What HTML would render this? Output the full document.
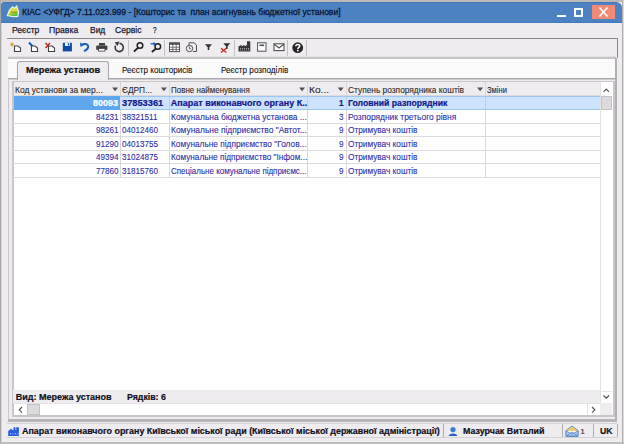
<!DOCTYPE html>
<html><head><meta charset="utf-8">
<style>
*{margin:0;padding:0;box-sizing:border-box}
html,body{width:624px;height:444px;overflow:hidden}
body{position:relative;background:#efecf0;font-family:"Liberation Sans",sans-serif;font-size:9px;color:#000}
.a{position:absolute}
.t{position:absolute;white-space:pre;line-height:1;transform-origin:0 0;-webkit-text-stroke:0.2px currentColor}
svg{position:absolute;overflow:visible}
.hl{position:absolute;height:1px}
.vl{position:absolute;width:1px}
</style></head><body>
<!-- outer frame -->
<div class="a" style="left:0;top:0;width:624px;height:2px;background:#bdb9b2"></div>
<div class="a" style="left:0;top:0;width:1px;height:444px;background:#a8a8a8"></div>
<div class="a" style="left:1px;top:23px;width:1px;height:421px;background:#d4d2d4"></div>
<div class="a" style="left:622px;top:0;width:1px;height:444px;background:#b0aeb0"></div>
<div class="a" style="left:623px;top:0;width:1px;height:444px;background:#dcdadc"></div>
<div class="a" style="left:0;top:442px;width:624px;height:2px;background:#bebcbe"></div>

<!-- title bar -->
<div class="a" style="left:1px;top:2px;width:621px;height:21px;background:#4c82c1;border-radius:3px 6px 0 0;border-top:1px solid #4078bb;border-bottom:1px solid #4279bc"></div>
<svg style="left:0;top:0" width="30" height="23">
  <defs><linearGradient id="ig" x1="0" y1="0" x2="0.3" y2="1"><stop offset="0" stop-color="#58b83a"/><stop offset="0.4" stop-color="#e4de3c"/><stop offset="0.65" stop-color="#d8da3a"/><stop offset="1" stop-color="#48c040"/></linearGradient></defs>
  <path d="M7.3 15.6 L9.3 10.3 L12.5 6.8 L14.3 8.3 L16.6 6 L18.6 11.9 L17.8 16.4 L13.3 16.8 Z" fill="url(#ig)" stroke="#eef6e6" stroke-width="1.1"/>
  <rect x="10.8" y="11.6" width="6" height="1.6" fill="#6a7a30" opacity="0.55"/>
</svg>
<!-- window buttons -->
<div class="a" style="left:557px;top:15px;width:9px;height:2px;background:#fff"></div>
<div class="a" style="left:574px;top:8px;width:9px;height:9px;border:2px solid #fff"></div>
<div class="a" style="left:592px;top:5px;width:23px;height:14px;background:#f08a76"></div>
<svg style="left:592px;top:5px" width="23" height="14"><path d="M7.5 2.5 L15.5 11.5 M15.5 2.5 L7.5 11.5" stroke="#fff" stroke-width="1.6"/></svg>

<!-- menu / toolbar lines -->
<div class="a" style="left:7px;top:38px;width:611px;height:1px;background:#8a888a"></div>
<div class="a" style="left:617px;top:38px;width:1px;height:20px;background:#8a888a"></div>
<div class="a" style="left:8px;top:56px;width:608px;height:1px;background:#e2e0e2"></div>
<div class="a" style="left:8px;top:57px;width:608px;height:2px;background:#c6c4c6"></div>

<!-- toolbar separators -->
<div class="a" style="left:128px;top:40px;width:1px;height:16px;background:#c4c2c4"></div>
<div class="a" style="left:164px;top:40px;width:1px;height:16px;background:#c4c2c4"></div>
<div class="a" style="left:234px;top:40px;width:1px;height:16px;background:#c4c2c4"></div>
<div class="a" style="left:287px;top:40px;width:1px;height:16px;background:#c4c2c4"></div>
<div class="a" style="left:306px;top:40px;width:1px;height:16px;background:#c4c2c4"></div>

<!-- toolbar icons -->
<svg style="left:0;top:0" width="320" height="60">
  <!-- new -->
  <path d="M12 42.3 L14.2 44.5 L12 46.7 L9.8 44.5 Z" fill="#e2a448"/>
  <path d="M14.5 51.5 V46 H18 L20.5 48 V51.5 Z" fill="#fff" stroke="#404040" stroke-width="1.1"/>
  <!-- edit -->
  <path d="M29 42.5 L34.5 48.5" stroke="#1060c0" stroke-width="2"/>
  <path d="M31.5 51.5 V46 H35 L37.5 48 V51.5 Z" fill="#fff" stroke="#404040" stroke-width="1.1"/>
  <!-- delete -->
  <path d="M45.5 43 L50 48 M50 43 L45.5 48" stroke="#c82a1a" stroke-width="1.4"/>
  <path d="M48.5 51.5 V46 H52 L54.5 48 V51.5 Z" fill="#fff" stroke="#404040" stroke-width="1.1"/>
  <!-- save -->
  <path d="M62.8 42.8 H71.9 V51.4 H62.8 Z" fill="#0d4aa8"/>
  <rect x="65" y="42.8" width="4.8" height="3.2" fill="#f4f4fa"/>
  <rect x="67.8" y="43.3" width="1.2" height="2.2" fill="#0d4aa8"/>
  <!-- undo -->
  <path d="M81.5 44.8 C 88 41.5, 91.5 48, 84 51.2" fill="none" stroke="#1060c0" stroke-width="2"/>
  <path d="M80 42.5 L80.5 47 L84 45 Z" fill="#1060c0"/>
  <!-- print -->
  <rect x="99" y="43" width="6" height="2.5" fill="#404040"/>
  <rect x="96.2" y="45.5" width="11.2" height="4.5" rx="1" fill="#404040"/>
  <rect x="98.5" y="48.5" width="6.5" height="2.6" fill="#fff" stroke="#404040" stroke-width="0.8"/>
  <!-- refresh -->
  <path d="M119.5 43.4 A4.1 4.1 0 1 1 115.6 45.6" fill="none" stroke="#383838" stroke-width="1.6"/>
  <path d="M114.6 42.6 L119.4 41.6 L117.6 46 Z" fill="#383838"/>
  <!-- search -->
  <circle cx="140" cy="45.5" r="2.8" fill="none" stroke="#202020" stroke-width="1.5"/>
  <path d="M138 47.8 L134 51.5" stroke="#202020" stroke-width="1.8"/>
  <!-- search arrow -->
  <circle cx="157.8" cy="46.5" r="2.8" fill="none" stroke="#202020" stroke-width="1.5"/>
  <path d="M155.8 48.8 L151.8 52" stroke="#202020" stroke-width="1.8"/>
  <path d="M150.5 43.8 H154.5" stroke="#1060c0" stroke-width="1.3"/>
  <path d="M153.5 41.8 L156 43.8 L153.5 45.8 Z" fill="#1060c0"/>
  <!-- table -->
  <rect x="169.5" y="42.8" width="10" height="8.8" fill="#fff" stroke="#505050" stroke-width="1"/>
  <rect x="169.5" y="42.8" width="10" height="2" fill="#505050"/>
  <path d="M169.5 47.2 H179.5 M169.5 49.4 H179.5 M172.8 42.8 V51.6 M176.2 42.8 V51.6" stroke="#505050" stroke-width="0.8"/>
  <!-- clock doc -->
  <path d="M189 48 V42.8 H194 L196.5 45 V51.5 H193" fill="none" stroke="#505050" stroke-width="1"/>
  <circle cx="189.5" cy="48.5" r="3.2" fill="#efecf0" stroke="#505050" stroke-width="1"/>
  <path d="M189.5 46.5 V48.7 H191" fill="none" stroke="#505050" stroke-width="0.8"/>
  <!-- filter -->
  <path d="M205 44.2 H212 L209.3 47.2 V50 L207.7 50 V47.2 Z" fill="#303030"/>
  <!-- filter x -->
  <path d="M223.3 43.2 H230.3 L227.6 46.2 V49 L226 49 V46.2 Z" fill="#303030"/>
  <path d="M221 48.3 L226.3 52.6 M226.3 48.3 L221 52.6" stroke="#d02818" stroke-width="1.3"/>
  <!-- factory -->
  <path d="M238.5 51.5 V46.5 L241.5 44.8 V46.5 L244.5 44.8 V46.5 L247 45 V41.2 H250.3 V51.5 Z" fill="#353535"/>
  <path d="M240 48.5 H249 M240 50 H249" stroke="#efecf0" stroke-width="0.6" stroke-dasharray="1 1"/>
  <!-- doc -->
  <rect x="257.6" y="42.8" width="8.4" height="8.4" fill="#fff" stroke="#505050" stroke-width="1"/>
  <rect x="259.5" y="44.5" width="4.6" height="1.6" fill="#505050"/>
  <!-- mail -->
  <rect x="274" y="43.8" width="10" height="6.8" fill="#fff" stroke="#505050" stroke-width="1.1"/>
  <path d="M274.2 44.2 L279 48 L283.8 44.2" fill="none" stroke="#505050" stroke-width="1.1"/>
  <!-- help -->
  <circle cx="297.7" cy="47.7" r="5.4" fill="#252525"/>
  <path d="M295.8 46.3 C 295.8 43.8, 299.8 43.8, 299.8 46 C 299.8 47.4, 297.8 47.5, 297.8 49" fill="none" stroke="#fff" stroke-width="1.5"/>
  <rect x="297" y="49.8" width="1.6" height="1.6" fill="#fff"/>
</svg>

<!-- tab strip -->
<div class="a" style="left:8px;top:59px;width:608px;height:19px;background:#fbfafb"></div>
<div class="a" style="left:8px;top:78px;width:608px;height:1px;background:#a6a4a6"></div>
<div class="a" style="left:8px;top:79px;width:608px;height:1px;background:#cfcdcf"></div>
<div class="a" style="left:17px;top:61px;width:92px;height:19px;background:#efecf0;border:1px solid #a6a4a6;border-bottom:none;border-radius:3px 3px 0 0"></div>

<!-- panel borders -->
<div class="a" style="left:615px;top:58px;width:2px;height:364px;background:#b2b0b2"></div>
<div class="a" style="left:8px;top:419px;width:609px;height:3px;background:#b6b4b6"></div>
<div class="a" style="left:8px;top:80px;width:1px;height:339px;background:#c8c6c8"></div>

<!-- grid frame -->
<div class="a" style="left:12px;top:81px;width:603px;height:336px;background:#fff;border:1px solid #c8c6c8;border-right-width:2px;border-bottom-width:2px;border-left-width:2px"></div>
<!-- header -->
<div class="a" style="left:14px;top:82px;width:586px;height:14px;background:#efecf0;border-bottom:1px solid #dcdadc"></div>
<div class="vl" style="left:120px;top:82px;height:95px;background:#d8d6d8"></div>
<div class="vl" style="left:169px;top:82px;height:95px;background:#d8d6d8"></div>
<div class="vl" style="left:307px;top:82px;height:95px;background:#d8d6d8"></div>
<div class="vl" style="left:346px;top:82px;height:95px;background:#d8d6d8"></div>
<div class="vl" style="left:485px;top:82px;height:95px;background:#d8d6d8"></div>
<svg style="left:0;top:0" width="620" height="100">
  <path d="M112.1 87.5 H118.1 L115.1 91.2 Z M160.9 87.5 H166.9 L163.9 91.2 Z M299.1 87.5 H305.1 L302.1 91.2 Z M337.7 87.5 H343.7 L340.7 91.2 Z M477.1 87.5 H483.1 L480.1 91.2 Z" fill="#555355"/>
</svg>
<!-- selected row -->
<div class="a" style="left:14px;top:96px;width:586px;height:14px;background:#cce3fb;border-top:1px solid #9ec6ee;border-bottom:1px solid #9ec6ee"></div>
<div class="a" style="left:14px;top:96px;width:106px;height:14px;background:#5fa6ee"></div>
<div class="vl" style="left:169px;top:97px;height:12px;background:#b4d0ee"></div>
<div class="vl" style="left:307px;top:97px;height:12px;background:#b4d0ee"></div>
<div class="vl" style="left:346px;top:97px;height:12px;background:#b4d0ee"></div>
<div class="vl" style="left:485px;top:97px;height:12px;background:#b4d0ee"></div>
<!-- row lines -->
<div class="hl" style="left:13px;top:123px;width:587px;background:#dcdadc"></div>
<div class="hl" style="left:13px;top:136px;width:587px;background:#dcdadc"></div>
<div class="hl" style="left:13px;top:150px;width:587px;background:#dcdadc"></div>
<div class="hl" style="left:13px;top:163px;width:587px;background:#dcdadc"></div>
<div class="hl" style="left:13px;top:177px;width:587px;background:#dcdadc"></div>

<!-- vertical scrollbar -->
<div class="a" style="left:600px;top:82px;width:1px;height:321px;background:#e4e2e4"></div>
<svg style="left:600px;top:82px" width="13" height="14"><path d="M3.6 9.8 L6.3 7.1 L9 9.8" fill="none" stroke="#505050" stroke-width="1.1"/></svg>
<div class="a" style="left:601px;top:96px;width:11px;height:14px;background:#dcdadc;border:1px solid #c4c2c4"></div>
<div class="hl" style="left:601px;top:391px;width:11px;background:#e4e2e4"></div>
<svg style="left:600px;top:391px" width="13" height="12"><path d="M3.5 4.5 L6.3 7.2 L9.1 4.5" fill="none" stroke="#505050" stroke-width="1.1"/></svg>

<!-- status band -->
<div class="a" style="left:13px;top:390px;width:587px;height:13px;background:#efecf0"></div>
<!-- horizontal scrollbar -->
<div class="hl" style="left:13px;top:403px;width:599px;background:#e4e2e4"></div>
<svg style="left:13px;top:403px" width="14" height="12"><path d="M9 4 L6.2 6.8 L9 9.6" fill="none" stroke="#505050" stroke-width="1.1"/></svg>
<div class="a" style="left:27px;top:404px;width:13px;height:11px;background:#dcdadc;border:1px solid #c4c2c4"></div>
<div class="vl" style="left:587px;top:403px;height:12px;background:#e4e2e4"></div>
<svg style="left:587px;top:403px" width="13" height="12"><path d="M5 4 L7.8 6.8 L5 9.6" fill="none" stroke="#505050" stroke-width="1.1"/></svg>
<div class="a" style="left:600px;top:403px;width:12px;height:12px;background:#efecf0"></div>

<!-- status bar -->
<div class="hl" style="left:7px;top:423px;width:610px;background:#d4d2d4"></div>
<div class="hl" style="left:7px;top:437px;width:610px;background:#d4d2d4"></div>
<div class="vl" style="left:442px;top:424px;height:13px;background:#e8e6e8"></div>
<div class="vl" style="left:443px;top:424px;height:13px;background:#b0aeb0"></div>
<div class="vl" style="left:562px;top:424px;height:13px;background:#b0aeb0"></div>
<div class="vl" style="left:593px;top:424px;height:13px;background:#b0aeb0"></div>
<div class="vl" style="left:617px;top:424px;height:13px;background:#b0aeb0"></div>
<svg style="left:0;top:0" width="620" height="444">
  <!-- building icon -->
  <path d="M8.2 436 V431 L11 428.8 L13.5 430.5 V427.2 H15.5 V430 H16.2 V427.2 H18.9 V436 Z" fill="#2a5ee0"/>
  <path d="M10 433.8 h1 M12.5 433.8 h1 M15 433.8 h1 M17.5 433.8 h1" stroke="#cfe0ff" stroke-width="1"/>
  <!-- user icon -->
  <circle cx="453" cy="429.6" r="2.6" fill="#3a7ad8"/>
  <path d="M448.6 436 C 449 432.5, 457 432.5, 457.4 436 Z" fill="#2a5ec8"/>
  <!-- mail icon -->
  <path d="M566 430.5 L572 426 L578 430.5 V436.3 H566 Z" fill="#f3cc6a" stroke="#5a88c8" stroke-width="0.9"/>
  <path d="M567.5 431 H576.5 V434 H567.5 Z" fill="#fdfdf8"/>
  <path d="M566 436.3 L572 432 L578 436.3 Z M566 430.8 L572 434.2 L578 430.8 V436.3 H566 Z" fill="#a8c8f0" stroke="#5a88c8" stroke-width="0.8"/>
</svg>

<div class="t" style="left:22.30px;top:7px;font-size:9.5px;font-weight:400;color:#0a1430;transform:scaleX(0.8958);-webkit-text-stroke-width:0.3px;">КІАС &lt;УФГД&gt; 7.11.023.999 - [Кошторис та  план асигнувань бюджетної установи]</div>
<div class="t" style="left:11.50px;top:26px;font-size:9px;font-weight:400;color:#20182e;transform:scaleX(0.9483);-webkit-text-stroke-width:0.25px;">Реєстр</div>
<div class="t" style="left:49.40px;top:26px;font-size:9px;font-weight:400;color:#20182e;transform:scaleX(0.9613);-webkit-text-stroke-width:0.25px;">Правка</div>
<div class="t" style="left:90.00px;top:26px;font-size:9px;font-weight:400;color:#20182e;transform:scaleX(0.9375);-webkit-text-stroke-width:0.25px;">Вид</div>
<div class="t" style="left:115.40px;top:26px;font-size:9px;font-weight:400;color:#20182e;transform:scaleX(0.9500);-webkit-text-stroke-width:0.25px;">Сервіс</div>
<div class="t" style="left:152.50px;top:26px;font-size:9px;font-weight:400;color:#20182e;transform:scaleX(0.7000);-webkit-text-stroke-width:0.25px;">?</div>
<div class="t" style="left:26.30px;top:66px;font-size:9px;font-weight:700;color:#101010;transform:scaleX(1.0219);">Мережа установ</div>
<div class="t" style="left:121.90px;top:66px;font-size:9px;font-weight:400;color:#101010;transform:scaleX(0.9038);-webkit-text-stroke-width:0.1px;">Реєстр кошторисів</div>
<div class="t" style="left:220.60px;top:66px;font-size:9px;font-weight:400;color:#101010;transform:scaleX(0.9054);-webkit-text-stroke-width:0.1px;">Реєстр розподілів</div>
<div class="t" style="left:14.80px;top:85.5px;font-size:9px;font-weight:400;color:#2a2a2a;transform:scaleX(0.9409);-webkit-text-stroke-width:0.1px;">Код установи за мер...</div>
<div class="t" style="left:121.80px;top:85.5px;font-size:9px;font-weight:400;color:#2a2a2a;transform:scaleX(0.9219);-webkit-text-stroke-width:0.1px;">ЄДРП...</div>
<div class="t" style="left:170.80px;top:85.5px;font-size:9px;font-weight:400;color:#2a2a2a;transform:scaleX(0.8865);-webkit-text-stroke-width:0.1px;">Повне найменування</div>
<div class="t" style="left:309.00px;top:85.5px;font-size:9px;font-weight:400;color:#2a2a2a;transform:scaleX(1.1294);-webkit-text-stroke-width:0.1px;">Ко...</div>
<div class="t" style="left:348.00px;top:85.5px;font-size:9px;font-weight:400;color:#2a2a2a;transform:scaleX(0.9280);-webkit-text-stroke-width:0.1px;">Ступень розпорядника коштів</div>
<div class="t" style="left:486.50px;top:85.5px;font-size:9px;font-weight:400;color:#2a2a2a;transform:scaleX(0.8478);-webkit-text-stroke-width:0.1px;">Зміни</div>
<div class="t" style="left:93.00px;top:99px;font-size:9px;font-weight:700;color:#ffffff;">80093</div>
<div class="t" style="left:122.20px;top:99px;font-size:9px;font-weight:700;color:#16168c;transform:scaleX(1.0300);">37853361</div>
<div class="t" style="left:170.80px;top:99px;font-size:9px;font-weight:700;color:#16168c;">Апарат виконавчого органу К..</div>
<div class="t" style="left:338.80px;top:99px;font-size:9px;font-weight:700;color:#16168c;transform:scaleX(0.9000);">1</div>
<div class="t" style="left:348.00px;top:99px;font-size:9px;font-weight:700;color:#16168c;transform:scaleX(0.9615);">Головний разпорядник</div>
<div class="t" style="left:95.50px;top:112.5px;font-size:9px;font-weight:400;color:#2d2da6;transform:scaleX(0.9000);-webkit-text-stroke-width:0.1px;">84231</div>
<div class="t" style="left:122.20px;top:112.5px;font-size:9px;font-weight:400;color:#2d2da6;transform:scaleX(0.9000);-webkit-text-stroke-width:0.1px;">38321511</div>
<div class="t" style="left:170.80px;top:112.5px;font-size:9px;font-weight:400;color:#2d2da6;transform:scaleX(0.9345);-webkit-text-stroke-width:0.1px;">Комунальна бюджетна установа ...</div>
<div class="t" style="left:338.80px;top:112.5px;font-size:9px;font-weight:400;color:#2d2da6;transform:scaleX(0.9000);-webkit-text-stroke-width:0.1px;">3</div>
<div class="t" style="left:348.00px;top:112.5px;font-size:9px;font-weight:400;color:#2d2da6;transform:scaleX(0.9345);-webkit-text-stroke-width:0.1px;">Розпорядник третього рівня</div>
<div class="t" style="left:95.50px;top:126px;font-size:9px;font-weight:400;color:#2d2da6;transform:scaleX(0.9000);-webkit-text-stroke-width:0.1px;">98261</div>
<div class="t" style="left:122.20px;top:126px;font-size:9px;font-weight:400;color:#2d2da6;transform:scaleX(0.9000);-webkit-text-stroke-width:0.1px;">04012460</div>
<div class="t" style="left:170.80px;top:126px;font-size:9px;font-weight:400;color:#2d2da6;transform:scaleX(0.9345);-webkit-text-stroke-width:0.1px;">Комунальне підприємство &quot;Автот...</div>
<div class="t" style="left:338.80px;top:126px;font-size:9px;font-weight:400;color:#2d2da6;transform:scaleX(0.9000);-webkit-text-stroke-width:0.1px;">9</div>
<div class="t" style="left:348.00px;top:126px;font-size:9px;font-weight:400;color:#2d2da6;transform:scaleX(0.9171);-webkit-text-stroke-width:0.1px;">Отримувач коштів</div>
<div class="t" style="left:95.50px;top:139.5px;font-size:9px;font-weight:400;color:#2d2da6;transform:scaleX(0.9000);-webkit-text-stroke-width:0.1px;">91290</div>
<div class="t" style="left:122.20px;top:139.5px;font-size:9px;font-weight:400;color:#2d2da6;transform:scaleX(0.9000);-webkit-text-stroke-width:0.1px;">04013755</div>
<div class="t" style="left:170.80px;top:139.5px;font-size:9px;font-weight:400;color:#2d2da6;transform:scaleX(0.9218);-webkit-text-stroke-width:0.1px;">Комунальне підприємство &quot;Голов...</div>
<div class="t" style="left:338.80px;top:139.5px;font-size:9px;font-weight:400;color:#2d2da6;transform:scaleX(0.9000);-webkit-text-stroke-width:0.1px;">9</div>
<div class="t" style="left:348.00px;top:139.5px;font-size:9px;font-weight:400;color:#2d2da6;transform:scaleX(0.9171);-webkit-text-stroke-width:0.1px;">Отримувач коштів</div>
<div class="t" style="left:95.50px;top:153px;font-size:9px;font-weight:400;color:#2d2da6;transform:scaleX(0.9000);-webkit-text-stroke-width:0.1px;">49394</div>
<div class="t" style="left:122.20px;top:153px;font-size:9px;font-weight:400;color:#2d2da6;transform:scaleX(0.9000);-webkit-text-stroke-width:0.1px;">31024875</div>
<div class="t" style="left:170.80px;top:153px;font-size:9px;font-weight:400;color:#2d2da6;transform:scaleX(0.9155);-webkit-text-stroke-width:0.1px;">Комунальне підприємство &quot;Інфом...</div>
<div class="t" style="left:338.80px;top:153px;font-size:9px;font-weight:400;color:#2d2da6;transform:scaleX(0.9000);-webkit-text-stroke-width:0.1px;">9</div>
<div class="t" style="left:348.00px;top:153px;font-size:9px;font-weight:400;color:#2d2da6;transform:scaleX(0.9171);-webkit-text-stroke-width:0.1px;">Отримувач коштів</div>
<div class="t" style="left:95.50px;top:166.5px;font-size:9px;font-weight:400;color:#2d2da6;transform:scaleX(0.9000);-webkit-text-stroke-width:0.1px;">77860</div>
<div class="t" style="left:122.20px;top:166.5px;font-size:9px;font-weight:400;color:#2d2da6;transform:scaleX(0.9000);-webkit-text-stroke-width:0.1px;">31815760</div>
<div class="t" style="left:170.80px;top:166.5px;font-size:9px;font-weight:400;color:#2d2da6;transform:scaleX(0.8856);-webkit-text-stroke-width:0.1px;">Спеціальне комунальне підприємс...</div>
<div class="t" style="left:338.80px;top:166.5px;font-size:9px;font-weight:400;color:#2d2da6;transform:scaleX(0.9000);-webkit-text-stroke-width:0.1px;">9</div>
<div class="t" style="left:348.00px;top:166.5px;font-size:9px;font-weight:400;color:#2d2da6;transform:scaleX(0.9171);-webkit-text-stroke-width:0.1px;">Отримувач коштів</div>
<div class="t" style="left:15.80px;top:392.5px;font-size:9px;font-weight:700;color:#10101c;">Вид: Мережа установ</div>
<div class="t" style="left:126.70px;top:392.5px;font-size:9px;font-weight:700;color:#10101c;transform:scaleX(0.9725);">Рядків: 6</div>
<div class="t" style="left:22.30px;top:427px;font-size:9px;font-weight:700;color:#10101c;transform:scaleX(0.9912);">Апарат виконавчого органу Київської міської ради (Київської міської державної адміністрації)</div>
<div class="t" style="left:462.60px;top:427px;font-size:9px;font-weight:700;color:#10101c;transform:scaleX(0.9866);">Мазурчак Виталий</div>
<div class="t" style="left:579.87px;top:428px;font-size:8px;font-weight:400;color:#303040;transform:scaleX(1.1333);-webkit-text-stroke-width:0.1px;">1</div>
<div class="t" style="left:599.50px;top:427px;font-size:9px;font-weight:700;color:#10101c;transform:scaleX(0.9615);">UK</div>
</body></html>
